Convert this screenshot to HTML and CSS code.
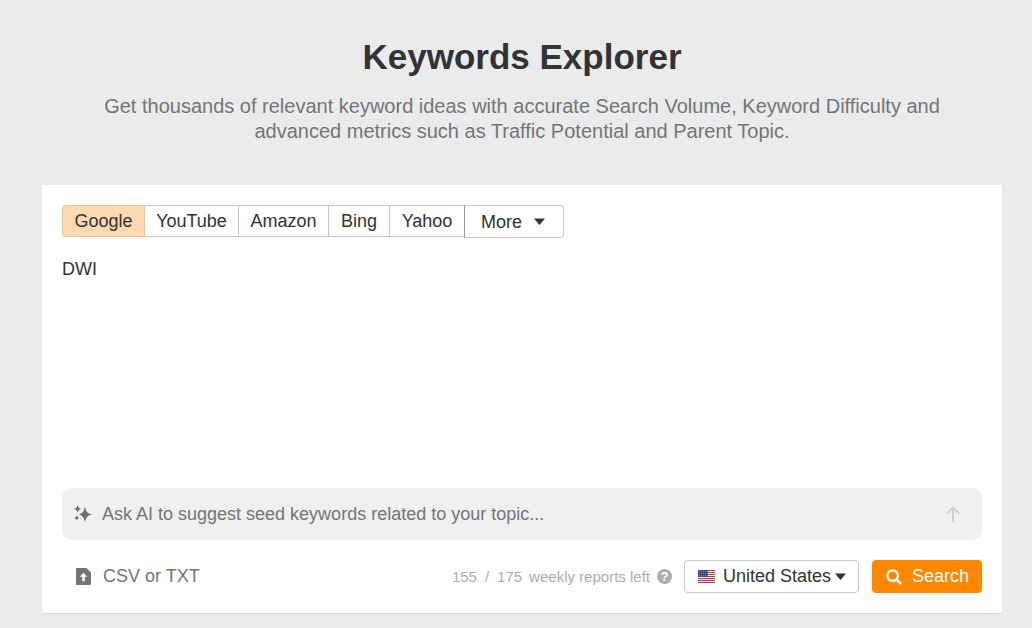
FILE: index.html
```html
<!DOCTYPE html>
<html lang="en">

<head>
    <meta charset="UTF-8">
    <meta name="viewport" content="width=device-width, initial-scale=1.0">
    <title>Keywords Explorer</title>
    <link rel="stylesheet" href="styles.css">
</head>

<body>

    <div class="page">
        <div class="header">
            <h1><span class="fit" >Keywords Explorer</span></h1>
            <p>Get thousands of relevant keyword ideas with accurate Search Volume, Keyword Difficulty and<br>advanced metrics such as Traffic Potential and Parent Topic.</p>
        </div>

        <div class="panel">
            <!-- search engines -->
            <ul class="tabs">
                <li class="google active">Google</li>
                <li class="youtube">YouTube</li>
                <li class="amazon">Amazon</li>
                <li class="bing">Bing</li>
                <li class="yahoo">Yahoo</li>
                <li class="more">More
                    <svg class="caret" width="11" height="7" viewBox="0 0 11 7"><path d="M0 0.5h11L5.5 7z" fill="#333" /></svg>
                </li>
            </ul>

            <div class="keywords">DWI</div>

            <!-- AI prompt -->
            <div class="ask">
                <svg class="sparkles" width="18" height="18" viewBox="0 0 18 18" fill="#6f7072">
                    <path d="M10.9 1.2Q11.6 8.5 18 9.4Q11.6 10.4 10.9 17.2Q10.1 10.4 4.6 9.4Q10.1 8.5 10.9 1.2z" />
                    <path d="M3.6 0Q4.2 3.3 7.2 3.9Q4.2 4.5 3.6 7.8Q3 4.5 0 3.9Q3 3.3 3.6 0z" />
                    <path d="M2.8 10.8L4.9 12.9L2.8 15L.7 12.9z" />
                </svg>
                <span class="ask_text">Ask AI to suggest seed keywords related to your topic...</span>
                <svg class="send" width="14" height="16" viewBox="0 0 14 16" fill="none" stroke="#cdcfd1" stroke-width="2"><path d="M7 16V1.5M.9 7.6L7 1.5L13.1 7.6" /></svg>
            </div>

            <div class="bottom">
                <svg class="file" width="15" height="17" viewBox="0 0 15 17">
                    <path d="M1 0H10.5L15 4.5V16a1 1 0 0 1-1 1H1a1 1 0 0 1-1-1V1a1 1 0 0 1 1-1z" fill="#757575" />
                    <path d="M7.5 4.8L11.2 8.8H8.8V13.3H6.2V8.8H3.8z" fill="#fff" />
                </svg>
                <span class="upload">CSV or TXT</span>

                <span class="used">155</span>
                <span class="slash">/</span>
                <span class="total">175</span>
                <span class="left">weekly reports left</span>
                <span class="help">?</span>

                <div class="country">
                    <svg class="flag" width="17" height="13" viewBox="0 0 17 13">
                        <path d="M0 0h17v13H0z" fill="#f5eff0" />
                        <path d="M0 .5h17M0 2.5h17M0 4.5h17M0 6.5h17M0 8.5h17M0 10.5h17M0 12.5h17" stroke="#b9374a" />
                        <path d="M0 0h10v7H0z" fill="#3b4a78" />
                        <path d="M1 1.5h9M1 3.5h9M1 5.5h9" stroke="#7d89ab" stroke-width=".8" stroke-dasharray="1 1" />
                    </svg>
                    <span>United States</span>
                    <svg class="caret" width="11" height="7" viewBox="0 0 11 7"><path d="M0 0.5h11L5.5 7z" fill="#333" /></svg>
                </div>

                <div class="search">
                    <svg width="16" height="16" viewBox="0 0 16 16" fill="none" stroke="#fff"><circle cx="6.6" cy="6.6" r="5.3" stroke-width="2.2" /><path d="M10.4 10.4L15 15" stroke-width="2.6" /></svg>
                    <span>Search</span>
                </div>
            </div>
        </div>
    </div>

</body>

</html>
```
FILE: styles.css
```css
* {
    margin: 0;
    padding: 0;
    box-sizing: border-box;
}

body {
    background: #eaebed;
    color: #333;
    font-family: "Liberation Sans", Arial, sans-serif;
    font-size: 18px;
    overflow: hidden;
}

li {
    list-style: none;
}

svg {
    display: block;
    flex: none;
}

.page {
    width: 960px;
    height: 628px;
    margin-left: 42px;
    padding-top: 36px;
}

.header {
    height: 149px;
    text-align: center;
}

.header h1 {
    font-size: 35px;
    line-height: 41px;
}

.header p {
    margin-top: 17px;
    font-size: 20px;
    line-height: 25px;
    color: #757575;
    white-space: nowrap;
}

.panel {
    height: 428px;
    padding: 20px;
    background: #fff;
    box-shadow: 0 1px 1px #d9dadc;
}

.tabs {
    display: flex;
    height: 33px;
}

.tabs li {
    height: 32px;
    margin-right: -1px;
    border: 1px solid #c8c8c8;
    line-height: 30px;
    text-align: center;
    white-space: nowrap;
}

.tabs .google {
    width: 83px;
    border-radius: 4px 0 0 4px;
}

.tabs .active {
    background: #ffd9b0;
    border-color: #e9c59e;
    position: relative;
}

.tabs .youtube {
    width: 95px;
}

.tabs .amazon {
    width: 91px;
}

.tabs .bing {
    width: 62px;
}

.tabs .yahoo {
    width: 76px;
}

.tabs .more {
    display: flex;
    align-items: center;
    width: 100px;
    height: 33px;
    padding-left: 16px;
    border-left-color: #999;
    border-radius: 0 4px 4px 0;
}

.tabs .more .caret {
    margin-left: 12px;
}

.keywords {
    height: 250px;
    padding-top: 20px;
    line-height: 22px;
}

.ask {
    display: flex;
    align-items: center;
    height: 52px;
    padding: 0 22px 0 12px;
    background: #eff0f2;
    border-radius: 10px;
    color: #757575;
}

.ask_text {
    margin-left: 10px;
}

.send {
    margin-left: auto;
}

.bottom {
    display: flex;
    align-items: center;
    height: 33px;
    margin-top: 20px;
    padding-left: 14px;
    white-space: nowrap;
}

.upload {
    margin-left: 12px;
    color: #757575;
}

.used {
    margin-left: auto;
}

.used,
.slash,
.total,
.left {
    font-size: 15px;
    color: #adadad;
}

.slash,
.total {
    margin-left: 8px;
}

.left {
    margin-left: 7px;
}

.help {
    width: 15px;
    height: 15px;
    margin-left: 7px;
    background: #adadad;
    border-radius: 50%;
    color: #fff;
    font-size: 13px;
    font-weight: bold;
    line-height: 15px;
    text-align: center;
}

.country {
    display: flex;
    align-items: center;
    width: 175px;
    height: 33px;
    margin-left: 12px;
    padding-left: 13px;
    border: 1px solid #c8c8c8;
    border-radius: 4px;
}

.country span {
    width: 105px;
    margin: 0 7px 0 8px;
}

.search {
    display: flex;
    align-items: center;
    width: 110px;
    height: 33px;
    margin-left: 13px;
    padding-left: 14px;
    background: #ff8800;
    border-radius: 4px;
    color: #fff;
}

.search span {
    margin-left: 10px;
}
```
